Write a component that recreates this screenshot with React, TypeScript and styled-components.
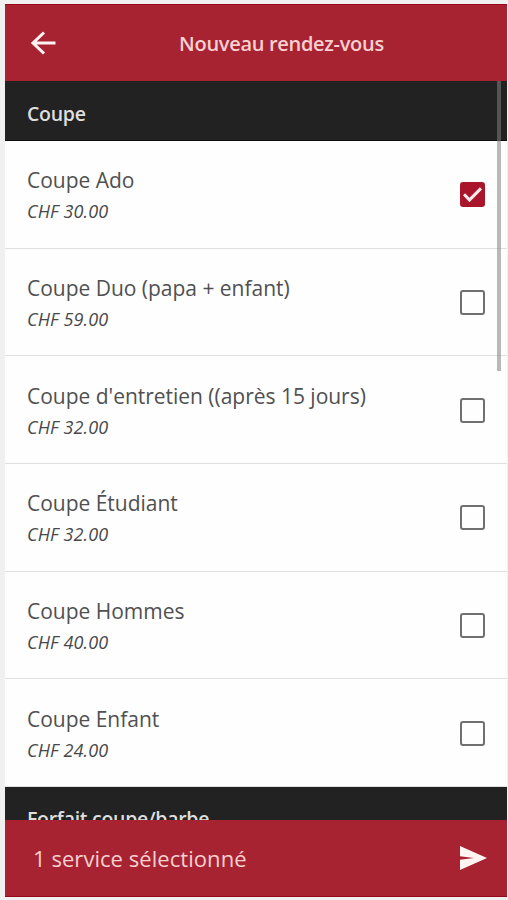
import React, { useState } from "react";
import styled, { createGlobalStyle } from "styled-components";

const GlobalStyle = createGlobalStyle`
  * { box-sizing: border-box; }
  body { margin: 0; background: #f0f0f0; overflow: hidden; font-family: "Open Sans", "Noto Sans", sans-serif; }
`;

const Screen = styled.div`
  width: 508px;
  height: 900px;
  padding: 4px 1px 3px 5px;
  display: flex;
  flex-direction: column;
`;

const Header = styled.header`
  flex: none;
  height: 77px;
  display: grid;
  grid-template-columns: 76px 1fr 26px;
  align-items: center;
  background: #a72332;
  border-top: 1px solid #98081b;
`;

const IconButton = styled.button`
  display: flex;
  align-items: center;
  justify-content: center;
  padding: 0;
  border: 0;
  background: none;
  color: #fff4f2;
`;

const Title = styled.h1`
  margin: 1px 0 0 1px;
  text-align: center;
  font-size: 20px;
  line-height: 28px;
  font-weight: 600;
  letter-spacing: -0.3px;
  color: #f8d0d0;
`;

const Content = styled.main`
  position: relative;
  flex: 1;
  min-height: 0;
  overflow: hidden;
  background: #fefefe;
`;

const SectionTitle = styled.h2`
  margin: 0;
  height: 60px;
  padding: 5px 22px 0;
  display: flex;
  align-items: center;
  background: #222;
  border-bottom: 1px solid #0c0c0c;
  font-size: 19.5px;
  font-weight: 600;
  letter-spacing: -0.28px;
  color: #dedede;
`;

const Row = styled.label`
  height: 107.65px;
  padding: 1px 22px 0;
  display: flex;
  align-items: center;
  justify-content: space-between;
  border-bottom: 1px solid #dfdfdf;
`;

const Details = styled.div`
  display: flex;
  flex-direction: column;
  gap: 4px;
  padding-top: 2px;
`;

const Name = styled.span`
  font-size: 21px;
  line-height: 28px;
  letter-spacing: -0.02px;
  color: #505050;
`;

const Price = styled.span`
  font-size: 18px;
  line-height: 27px;
  letter-spacing: 0.1px;
  font-style: italic;
  color: #484848;
`;

const Check = styled.input`
  appearance: none;
  margin: 0;
  width: 25px;
  height: 25px;
  border: 2px solid #707070;
  border-radius: 3px;
  display: grid;
  place-items: center;

  &:checked {
    background: #a9162b;
    border-color: #a9162b;
  }

  &:checked::before {
    content: "";
    width: 19px;
    height: 15px;
    background: #ffe9e9;
    clip-path: polygon(0 53%, 11% 40%, 34% 69%, 89% 0, 100% 14%, 34% 99%);
  }
`;

const ScrollThumb = styled.div`
  position: absolute;
  top: 0;
  right: 6px;
  width: 4px;
  height: 290px;
  background: rgba(128, 128, 128, 0.55);
`;

const Footer = styled.footer`
  flex: none;
  height: 77px;
  padding: 0 20px 0 28px;
  display: flex;
  align-items: center;
  justify-content: space-between;
  background: #a72332;
  border-bottom: 1px solid #98081b;
  font-size: 22px;
  letter-spacing: 0.05px;
  color: #f8d0d0;
`;

const services = [
  { name: "Coupe Ado", price: "CHF 30.00" },
  { name: "Coupe Duo (papa + enfant)", price: "CHF 59.00" },
  { name: "Coupe d'entretien ((après 15 jours)", price: "CHF 32.00" },
  { name: "Coupe Étudiant", price: "CHF 32.00" },
  { name: "Coupe Hommes", price: "CHF 40.00" },
  { name: "Coupe Enfant", price: "CHF 24.00" },
];

export default function App() {
  const [selected, setSelected] = useState<string[]>(["Coupe Ado"]);
  const toggle = (name: string) =>
    setSelected((s) => (s.includes(name) ? s.filter((n) => n !== name) : [...s, name]));

  return (
    <>
      <GlobalStyle />
      <Screen>
        <Header>
          <IconButton aria-label="Retour">
            <svg width="26" height="24" viewBox="0 0 26 24" fill="none" stroke="currentColor" strokeWidth="3">
              <path d="M14 1.5 3 12l11 10.5M3 12h22.5" />
            </svg>
          </IconButton>
          <Title>Nouveau rendez-vous</Title>
        </Header>
        <Content>
          <SectionTitle>Coupe</SectionTitle>
          {services.map(({ name, price }) => (
            <Row key={name}>
              <Details>
                <Name>{name}</Name>
                <Price>{price}</Price>
              </Details>
              <Check type="checkbox" checked={selected.includes(name)} onChange={() => toggle(name)} />
            </Row>
          ))}
          <SectionTitle>Forfait coupe/barbe</SectionTitle>
          <ScrollThumb />
        </Content>
        <Footer>
          <span>{selected.length} service sélectionné</span>
          <IconButton aria-label="Continuer">
            <svg width="28" height="26" viewBox="0 0 28 26" fill="currentColor">
              <path d="M1 1 28 13 1 25V14.8L15 13 1 11.2Z" />
            </svg>
          </IconButton>
        </Footer>
      </Screen>
    </>
  );
}
